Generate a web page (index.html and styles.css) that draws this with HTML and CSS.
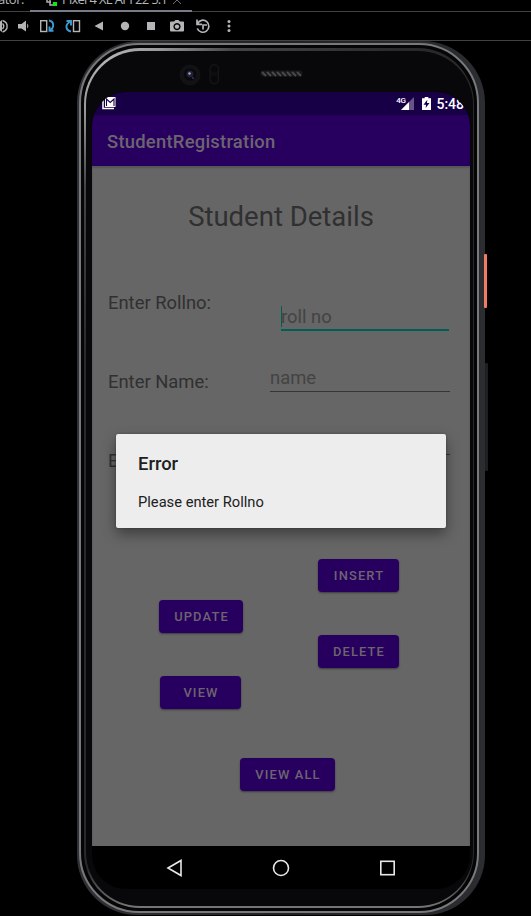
FILE: index.html
```html
<!DOCTYPE html>
<html lang="en">
<head>
<meta charset="utf-8">
<title>Emulator</title>
<link rel="stylesheet" href="styles.css">
</head>
<body>
<div class="window">
  <header class="tabs">
    <span class="tool-name">ator:</span>
    <div class="tab">
      <svg class="device-icon" width="14" height="14" viewBox="0 0 14 14"><path d="M2 0V9H6M5 3H12V6M5 3V12H8" fill="none" stroke="#aeb0b3" stroke-width="1.5"/><rect x="8" y="9" width="4" height="4" fill="#0bea12"/></svg>
      <span class="tab-name">Pixel 4 XL API 22 5.1</span>
      <svg class="close" width="8" height="8" viewBox="0 0 8 8"><path d="M0 0L8 8M8 0L0 8" stroke="#6d6f72"/></svg>
    </div>
  </header>
  <svg class="toolbar" width="531" height="28" viewBox="0 0 531 28" fill="#b4b5b7">
    <path d="M-4 11H-2L2 8V20L-2 17H-4Z"/><path d="M2.5 8.500Q8 10 7 16Q6 19 2.500 20M2.500 11.500Q5 14 2.500 17" fill="none" stroke="#b4b5b7" stroke-width="1.400"/>
    <path d="M18 12H21.500L26 8.500V19.500L21.500 16.500H18Z"/><path d="M27.200 11.500Q29.500 14 27.200 16.500Z"/>
    <rect x="40.700" y="8.700" width="6" height="10.800" fill="none" stroke="#b4b5b7" stroke-width="1.400"/>
    <path d="M49 8.500C54.500 9.500 54.500 16 49.500 18.500M49.500 14.500V18.700H53.500" fill="none" stroke="#3d9bd3" stroke-width="1.900"/>
    <rect x="73.500" y="8.700" width="6" height="10.800" fill="none" stroke="#b4b5b7" stroke-width="1.400"/>
    <path d="M71 19.500C65 18 65 12 70.500 9.500M66.500 9H71V13.500" fill="none" stroke="#3d9bd3" stroke-width="1.900"/>
    <path d="M94.500 14L103 9.500V18.500Z"/><circle cx="125" cy="14" r="4.200"/><rect x="147" y="10" width="8" height="8"/>
    <path fill-rule="evenodd" d="M171 9.500H174L175.500 8H178.500L180 9.500H183Q184 9.500 184 10.500V18.500Q184 19.500 183 19.500H171Q170 19.500 170 18.500V10.500Q170 9.500 171 9.500ZM177 11A3.600 3.600 0 1 0 177.010 11Z"/><circle cx="177" cy="14.600" r="2.200"/>
    <path d="M197.500 11.500A6 6 0 1 1 197.300 16.500M197 7.500V12.300H202M207 13H203V17.500" fill="none" stroke="#b4b5b7" stroke-width="1.700"/>
    <circle cx="229" cy="9.500" r="1.500"/><circle cx="229" cy="14" r="1.500"/><circle cx="229" cy="18.500" r="1.500"/>
  </svg>
  <main class="stage">
    <div class="side-key power"></div>
    <div class="side-key volume"></div>
    <div class="shell">
      <div class="rim">
        <div class="bezel">
          <div class="sensors">
            <svg width="378" height="41" viewBox="0 0 378 41">
              <circle cx="98" cy="24" r="10.500" fill="#121214"/><circle cx="98" cy="23.500" r="6" fill="#08080b"/><circle cx="98" cy="23" r="3.500" fill="#1e2138"/><circle cx="97.500" cy="22.500" r="1.200" fill="#a9acc0"/><circle cx="101" cy="27" r="1" fill="#34365c"/>
              <rect x="118" y="13.500" width="8.500" height="19.500" rx="4" fill="#0d0d0f" stroke="#161618"/><circle cx="122.300" cy="18" r="3" fill="#080809"/><circle cx="122.300" cy="28" r="3" fill="#080809"/>
              <rect x="168.500" y="19.500" width="42" height="6" rx="3" fill="#19191a"/><path d="M170 21L174 25M175 21L179 25M180 21L184 25M185 21L189 25M190 21L194 25M195 21L199 25M200 21L204 25M205 21L209 25" stroke="#4a4a4b" stroke-width="1.800"/>
            </svg>
          </div>
          <div class="screen">
            <div class="status">
              <svg width="16" height="13" viewBox="0 0 16 13"><path d="M2 2.500V11.500H13" fill="none" stroke="#fff" stroke-width="1.500"/><rect x="4" y="0" width="10.500" height="10" fill="#fff"/><path d="M5.500 9V2L9.200 5.500L13 2V9" fill="none" stroke="#180046" stroke-width="1.100"/></svg>
              <div class="status-right">
                <span class="network">4G</span>
                <svg width="13" height="13" viewBox="0 0 13 13"><path d="M13 0V13H0Z" fill="#675586"/><path d="M8 5V13H0Z" fill="#fff"/></svg>
                <svg class="battery" width="9" height="13" viewBox="0 0 9 13"><path d="M0 1.300H2.700V0H6.300V1.300H9V13H0Z" fill="#fff"/><path d="M5.300 2.700L1.500 7.800H4L3.700 11L7.500 6H5Z" fill="#180046"/></svg>
                <span class="clock">5:48</span>
              </div>
            </div>
            <div class="appbar">StudentRegistration</div>
            <section class="content">
              <h1>Student Details</h1>
              <div class="row roll"><label>Enter Rollno:</label><div class="field focused"><span>roll no</span></div></div>
              <div class="row name"><label>Enter Name:</label><div class="field">name</div></div>
              <div class="row marks"><label>E</label><div class="field"></div></div>
              <div class="actions">
                <div class="left"><button class="update">UPDATE</button><button class="view">VIEW</button></div>
                <div class="right"><button class="insert">INSERT</button><button class="delete">DELETE</button></div>
              </div>
              <button class="all">VIEW ALL</button>
              <div class="dialog"><h2>Error</h2><p>Please enter Rollno</p></div>
            </section>
            <nav class="navbar">
              <svg width="18" height="18" viewBox="0 0 18 18"><path d="M3 9L16 1.500V16.500Z"/></svg>
              <svg width="18" height="18" viewBox="0 0 18 18"><circle cx="9" cy="9" r="7.500"/></svg>
              <svg width="18" height="18" viewBox="0 0 18 18"><rect x="1.800" y="2.300" width="13.400" height="13.400"/></svg>
            </nav>
          </div>
        </div>
      </div>
    </div>
  </main>
</div>
</body>
</html>
```
FILE: styles.css
```css
* { box-sizing: border-box; }
body { margin: 0; background: #000; font-family: Roboto, sans-serif; }
h1, h2, p { margin: 0; font-weight: 400; }
.window { width: 531px; height: 916px; overflow: hidden; display: flex; flex-direction: column; }
.tabs { height: 12px; display: flex; border-bottom: 1px solid #3f4143; font: 13px/16px "Open Sans", sans-serif; color: #b5b7b9; white-space: nowrap; }
.tool-name { width: 30px; margin-top: -9px; margin-left: -2px; letter-spacing: -.5px; }
.tab { width: 162px; height: 12px; margin-left: 2px; display: flex; align-items: flex-start; border-bottom: 2px solid #777c86; }
.device-icon { margin: -7px 3px 0 15px; flex: none; }
.tab-name { width: 108px; margin-top: -9px; letter-spacing: -.8px; word-spacing: .4px; }
.close { margin: -4px 0 0 3px; flex: none; }
.toolbar { display: block; flex: none; }
.stage { position: relative; flex: none; height: 876px; border-top: 1px solid #414243; padding: 0 0 0 77px; }
.shell { position: relative; width: 408px; height: 874px; padding: 2px 6px 2px 2px; border-radius: 62px 62px 60px 60px; background: linear-gradient(90deg, #303235, #1f2123 50%, #2b2d30); }
.rim { height: 100%; border: 2px solid #77797c; border-radius: 60px; padding: 3px; background: #050506; }
.bezel { height: 100%; border-style: solid; border-color: transparent; border-width: 3px 1px 2px 2px; border-radius: 56px; padding: 0 4px 19px 6px; background: linear-gradient(#08080a, #08080a) padding-box, radial-gradient(circle at 20px 10px, #b5b5b5 0, #999 55px, #444 130px, transparent 300px) border-box, linear-gradient(0deg, #777 0, #29292b 40px) border-box; }
.sensors { height: 41px; }
.sensors svg { display: block; }
.screen { width: 378px; height: 797px; border-radius: 34px; overflow: hidden; background: #000; }
.status { height: 23px; padding: 5px 6px 0 9px; display: flex; justify-content: space-between; background: #180046; color: #fff; }
.status-right { display: flex; align-items: flex-start; }
.network { font-size: 8px; line-height: 8px; font-weight: 500; letter-spacing: -.4px; margin: 0 -4px 0 0; }
.battery { margin: 0 5px 0 8px; }
.clock { font-size: 14px; line-height: 15px; font-weight: 500; }
.appbar { height: 51px; padding: 0 0 0 15px; line-height: 53px; font-size: 18.400px; font-weight: 500; letter-spacing: .25px; color: #6c6570; background: #27005f; }
.content { position: relative; height: 680px; background: #666; box-shadow: inset 0 2px 2px #555; color: #303030; }
h1 { padding-top: 35px; text-align: center; font-size: 27.500px; line-height: 32px; }
.row { display: flex; justify-content: space-between; align-items: flex-start; padding: 0 20px 0 16px; font-size: 18.400px; line-height: 24px; }
.roll { height: 75px; margin-top: 57px; padding: 0 21px 0 16px; }
.roll label { margin-top: 1px; }
.roll .field { width: 168px; height: 27px; margin-top: 14px; }
.field { width: 180px; border-bottom: 1px solid #363636; color: #434343; }
.focused { border-bottom: 2px solid #005e55; }
.focused span { display: block; height: 21px; margin-top: 2px; line-height: 21px; margin-left: 0; border-left: 1px solid #005e55; text-indent: -1px; }
.name { height: 84px; }
.name label { margin-top: 5px; }
.name .field { height: 27px; line-height: 26px; }
.marks { height: 50px; }
.marks label { margin-top: 0; }
.marks .field { height: 6px; }
.actions { display: flex; justify-content: space-between; margin-top: 60px; padding: 0 71px 0 67px; height: 199px; }
.left, .right { display: flex; flex-direction: column; gap: 43px; }
.left { padding-top: 41px; }
button { display: block; height: 33px; padding: 0; border: 0; border-radius: 4px; background: #27005f; color: #6c6570; box-shadow: 0 1px 2px #3b3b3b; font: 500 12.900px/34px Roboto, sans-serif; letter-spacing: 1.150px; text-indent: 1px; text-align: center; }
.update { width: 84px; }
.view { width: 81px; margin-left: 1px; }
.insert, .delete { width: 81px; }
.all { width: 95px; margin-left: 148px; }
.dialog { position: absolute; left: 24px; top: 267.500px; width: 330px; height: 94px; padding: 18px 22px; border-radius: 2px; background: #ededed; box-shadow: 0 6px 14px rgba(0, 0, 0, .4), 0 0 2px #444; color: #202020; }
h2 { font-size: 18.400px; line-height: 24px; font-weight: 500; }
.dialog p { margin-top: 17px; font-size: 14.700px; line-height: 18px; }
.navbar { height: 43px; display: flex; align-items: center; justify-content: center; gap: 89px; }
.navbar svg { fill: none; stroke: #e8e8e8; stroke-width: 1.600; }
.side-key { position: absolute; z-index: 1; }
.power { left: 484px; top: 213px; width: 3px; height: 54px; border-radius: 1px; background: #f17b67; }
.volume { left: 485px; top: 322px; width: 3px; height: 108px; border-radius: 1px; background: #1d1f20; }
```
